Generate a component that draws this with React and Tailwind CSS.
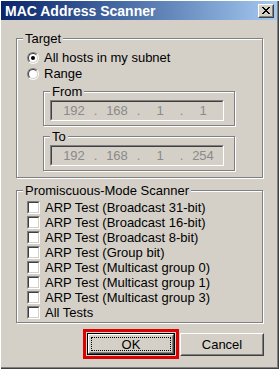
import React from "react";

const Groupbox = ({ title, className, children }) => (
  <div
    className={`flex flex-col items-start border border-[#808080] shadow-[1px_1px_0_#fff,inset_1px_1px_0_#fff] ${className}`}
  >
    <span className="-mt-[8px] ml-[6px] h-[15px] bg-[#d4d0c8] px-[2px] leading-[15px]">
      {title}
    </span>
    {children}
  </div>
);

const Radio = ({ checked }) => (
  <div className="flex h-[12px] w-[12px] rounded-full border border-t-[#808080] border-l-[#808080] border-r-white border-b-white">
    <div className="flex flex-1 items-center justify-center rounded-full border border-t-[#404040] border-l-[#404040] border-r-[#d4d0c8] border-b-[#d4d0c8] bg-white">
      {checked && <div className="h-[4px] w-[4px] rounded-full bg-black" />}
    </div>
  </div>
);

const Checkbox = () => (
  <div className="flex h-[13px] w-[13px] border border-t-[#808080] border-l-[#808080] border-r-white border-b-white">
    <div className="flex-1 border border-t-[#404040] border-l-[#404040] border-r-[#d4d0c8] border-b-[#d4d0c8] bg-white" />
  </div>
);

const IpField = ({ parts }) => (
  <div className="ml-[6px] mt-[1px] flex h-[21px] w-[174px] border border-t-[#808080] border-l-[#808080] border-r-white border-b-white">
    <div className="flex flex-1 items-center border border-t-[#404040] border-l-[#404040] border-r-[#d4d0c8] border-b-[#d4d0c8] pl-[4px] text-[#8a8a8a]">
      {parts.map((p, i) => (
        <React.Fragment key={i}>
          {i > 0 && <span className="w-[7px] text-center">.</span>}
          <span className="w-[36px] text-center">{p}</span>
        </React.Fragment>
      ))}
    </div>
  </div>
);

const tests = [
  "ARP Test (Broadcast 31-bit)",
  "ARP Test (Broadcast 16-bit)",
  "ARP Test (Broadcast 8-bit)",
  "ARP Test (Group bit)",
  "ARP Test (Multicast group 0)",
  "ARP Test (Multicast group 1)",
  "ARP Test (Multicast group 3)",
  "All Tests",
];

export default function App() {
  return (
    <div className="flex h-[369px] w-[279px] flex-col bg-[#d4d0c8] font-['Liberation_Sans',Arial,sans-serif] text-[13px] leading-[15px] text-black shadow-[inset_1px_1px_0_#fff,inset_-1px_-1px_0_#404040,inset_-2px_-2px_0_#808080]">
      {/* Caption */}
      <div className="ml-[1px] mr-[2px] mt-[1px] flex h-[19px] items-center justify-between bg-gradient-to-r from-[#0a246a] to-[#a6caf0] pl-[4px] pr-[3px]">
        <span className="pt-[1px] text-[14px] font-bold text-white">MAC Address Scanner</span>
        <div className="flex h-[14px] w-[16px] border border-t-white border-l-white border-r-[#404040] border-b-[#404040]">
          <div className="flex flex-1 items-center justify-center border border-t-[#d4d0c8] border-l-[#d4d0c8] border-r-[#808080] border-b-[#808080] bg-[#d4d0c8]">
            <svg width="8" height="7" viewBox="0 0 8 7" shapeRendering="crispEdges">
              <path
                fill="#000"
                d="M0 0h2v1h-2zM6 0h2v1h-2zM1 1h2v1h-2zM5 1h2v1h-2zM2 2h4v1h-4zM3 3h2v1h-2zM2 4h4v1h-4zM1 5h2v1h-2zM5 5h2v1h-2zM0 6h2v1h-2zM6 6h2v1h-2z"
              />
            </svg>
          </div>
        </div>
      </div>

      {/* Target */}
      <Groupbox title="Target" className="ml-[16px] mt-[18px] w-[247px] pb-[6px]">
        <div className="mt-[4px] flex h-[15px] items-center">
          <div className="ml-[10px]">
            <Radio checked />
          </div>
          <span className="ml-[5px]">All hosts in my subnet</span>
        </div>
        <div className="mt-[1px] flex h-[15px] items-center">
          <div className="ml-[10px]">
            <Radio />
          </div>
          <span className="ml-[5px]">Range</span>
        </div>
        <Groupbox title="From" className="ml-[26px] mt-[10px] w-[192px] pb-[4px]">
          <IpField parts={["192", "168", "1", "1"]} />
        </Groupbox>
        <Groupbox title="To" className="ml-[26px] mt-[10px] w-[192px] pb-[4px]">
          <IpField parts={["192", "168", "1", "254"]} />
        </Groupbox>
      </Groupbox>

      {/* Promiscuous */}
      <Groupbox title="Promiscuous-Mode Scanner" className="ml-[16px] mt-[12px] w-[247px] pb-[2px]">
        <div className="mt-[2px] flex flex-col">
          {tests.map((t) => (
            <div key={t} className="flex h-[15px] items-center">
              <div className="ml-[10px]">
                <Checkbox />
              </div>
              <span className="ml-[5px]">{t}</span>
            </div>
          ))}
        </div>
      </Groupbox>

      {/* Buttons */}
      <div className="ml-[83px] mt-[6px] flex items-center">
        <div className="border-[3px] border-[#dd0000] p-[1px]">
          <div className="flex h-[22px] w-[88px] border border-black">
            <div className="flex flex-1 border border-t-white border-l-white border-r-[#404040] border-b-[#404040]">
              <div className="flex flex-1 items-center justify-center border border-t-[#d4d0c8] border-l-[#d4d0c8] border-r-[#808080] border-b-[#808080] p-[1px]">
                <div className="flex h-full w-full items-center justify-center border border-dotted border-black">
                  OK
                </div>
              </div>
            </div>
          </div>
        </div>
        <div className="ml-[1px] flex h-[23px] w-[84px] border border-t-white border-l-white border-r-[#404040] border-b-[#404040]">
          <div className="flex flex-1 items-center justify-center border border-t-[#d4d0c8] border-l-[#d4d0c8] border-r-[#808080] border-b-[#808080]">
            Cancel
          </div>
        </div>
      </div>
    </div>
  );
}
